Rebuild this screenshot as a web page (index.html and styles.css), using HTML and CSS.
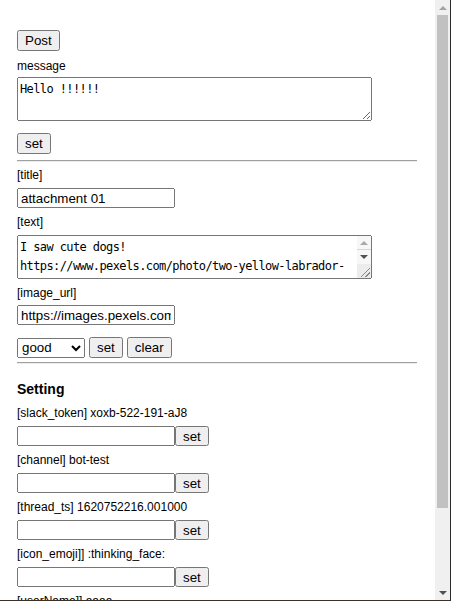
FILE: index.html
```html
<!DOCTYPE html>
<html lang="en">
<head>
<meta charset="utf-8">
<title>Slack post</title>
<link rel="stylesheet" href="styles.css">
</head>
<body>
<div class="frame">
  <main class="page">
    <button class="btn">Post</button>
    <div class="label label-msg">message</div>
    <textarea class="area" rows="2">Hello !!!!!!</textarea>
    <button class="btn btn-set">set</button>
    <hr class="rule rule-top">
    <div class="label label-first">[title]</div>
    <input class="text-input" type="text" value="attachment 01">
    <div class="label">[text]</div>
    <div class="area-wrap">
      <textarea class="area attach-text" rows="2">I saw cute dogs!
https://www.pexels.com/photo/two-yellow-labrador-retriever-puppies-1108099/</textarea>
      <div class="mini-sb" aria-hidden="true">
        <div class="mini-btn mini-up"></div>
        <div class="mini-btn mini-down"></div>
        <div class="mini-corner"></div>
      </div>
    </div>
    <div class="label label-tight">[image_url]</div>
    <input class="text-input" type="text" value="https://images.pexels.com/photos/1108099/pexels-photo-1108099.jpeg">
    <div class="controls">
      <select class="choice">
        <option>good</option>
        <option>bad</option>
      </select>
      <button class="btn">set</button>
      <button class="btn">clear</button>
    </div>
    <hr class="rule rule-bottom">
    <h3 class="heading">Setting</h3>
    <div class="field field-first">
      <div class="label">[slack_token] xoxb-522-191-aJ8</div>
      <div class="input-row"><input class="text-input" type="text"><button class="btn">set</button></div>
    </div>
    <div class="field">
      <div class="label">[channel] bot-test</div>
      <div class="input-row"><input class="text-input" type="text"><button class="btn">set</button></div>
    </div>
    <div class="field">
      <div class="label">[thread_ts] 1620752216.001000</div>
      <div class="input-row"><input class="text-input" type="text"><button class="btn">set</button></div>
    </div>
    <div class="field">
      <div class="label">[icon_emoji]] :thinking_face:</div>
      <div class="input-row"><input class="text-input" type="text"><button class="btn">set</button></div>
    </div>
    <div class="field">
      <div class="label">[userName]] aaaa</div>
      <div class="input-row"><input class="text-input" type="text"><button class="btn">set</button></div>
    </div>
  </main>
  <div class="scrollbar" aria-hidden="true">
    <div class="sb-btn sb-up"></div>
    <div class="sb-track"><div class="sb-thumb"></div></div>
    <div class="sb-btn sb-down"></div>
  </div>
</div>
</body>
</html>
```

FILE: styles.css
```css
html, body {
  margin: 0;
  padding: 0;
  background: #fff;
}

body {
  font-family: "Liberation Sans", Arial, sans-serif;
  font-size: 12px;
  color: #000;
  overflow: hidden;
}

.frame {
  width: 451px;
  height: 601px;
  box-sizing: border-box;
  border-right: 1px solid #2a2a2a;
  border-bottom: 1px solid #3a3226;
  display: flex;
  overflow: hidden;
}

.page {
  flex: 1;
  min-width: 0;
  overflow: hidden;
  padding: 30px 0 0 17px;
  display: flex;
  flex-direction: column;
  align-items: flex-start;
}

.page > * {
  flex-shrink: 0;
}

.btn {
  font-family: "Liberation Sans", Arial, sans-serif;
  font-size: 13.333px;
  margin: 0;
}

.btn-set {
  margin-top: 12px;
}

.label {
  line-height: 14px;
  margin: 7px 0 6px;
}

.label-msg {
  margin: 8px 0 4px;
}

.label-first {
  margin-top: 6px;
}

.label-tight {
  margin-bottom: 5px;
}

.area {
  display: block;
  width: 355px;
  height: 44px;
  box-sizing: border-box;
  margin: 0;
  padding: 2px;
  font-family: "DejaVu Sans Mono", "Liberation Mono", monospace;
  font-size: 12px;
  letter-spacing: -0.6px;
  line-height: 19px;
  color: #000;
}

.area-wrap {
  position: relative;
  width: 355px;
  height: 44px;
}

.attach-text {
  padding-right: 16px;
  overflow: hidden;
  resize: none;
}

.mini-sb {
  position: absolute;
  top: 1px;
  right: 1px;
  bottom: 1px;
  width: 14px;
  display: flex;
  flex-direction: column;
  background: #f0f0f0;
}

.mini-btn {
  height: 14px;
  flex: none;
  display: flex;
  align-items: center;
  justify-content: center;
  background: #f7f7f7;
}

.mini-up {
  border-bottom: 1px solid #d6d6d6;
  height: 13px;
}

.mini-up::before,
.mini-down::before {
  content: "";
  width: 0;
  height: 0;
  border-left: 4px solid transparent;
  border-right: 4px solid transparent;
}

.mini-up::before {
  border-bottom: 4px solid #a9a9a9;
}

.mini-down::before {
  border-top: 4px solid #505050;
}

.mini-corner {
  flex: 1;
  background:
    linear-gradient(135deg, transparent 6px, #8a8a8a 6px, #8a8a8a 7px, transparent 7px, transparent 9px, #8a8a8a 9px, #8a8a8a 10px, transparent 10px) right 1px bottom 1px / 9px 9px no-repeat,
    #ececec;
}

.text-input {
  width: 158px;
  height: 20px;
  box-sizing: border-box;
  margin: 0;
  padding: 1px 2px;
  font-family: "Liberation Sans", Arial, sans-serif;
  font-size: 13.333px;
  color: #000;
}

.controls {
  display: flex;
  align-items: center;
  gap: 4px;
  margin-top: 12px;
}

.choice {
  width: 68px;
  height: 20px;
  margin: 0;
  font-family: "Liberation Sans", Arial, sans-serif;
  font-size: 13.333px;
  color: #000;
}

.rule {
  width: 400px;
  height: 0;
  margin: 0;
  border: none;
  border-top: 1px solid #a0a0a0;
  border-bottom: 1px solid #ececec;
}

.rule-top {
  margin-top: 6px;
}

.rule-bottom {
  margin-top: 4px;
}

.heading {
  font-size: 14px;
  font-weight: bold;
  line-height: 16px;
  margin: 17px 0 0;
}

.field .label {
  margin: 7px 0 6px;
}

.field-first .label {
  margin-top: 9px;
}

.input-row {
  display: flex;
  align-items: stretch;
}

.input-row .btn {
  height: 20px;
  padding-top: 0;
  padding-bottom: 0;
}

.scrollbar {
  width: 15px;
  flex: none;
  background: #f0f0f0;
  display: flex;
  flex-direction: column;
}

.sb-btn {
  height: 15px;
  flex: none;
  display: flex;
  align-items: center;
  justify-content: center;
}

.sb-up::before,
.sb-down::before {
  content: "";
  width: 0;
  height: 0;
  border-left: 4px solid transparent;
  border-right: 4px solid transparent;
}

.sb-up::before {
  border-bottom: 4px solid #a3a3a3;
}

.sb-down::before {
  border-top: 4px solid #505050;
}

.sb-track {
  flex: 1;
  padding: 0 2px;
}

.sb-thumb {
  height: 493px;
  background: #c1c1c1;
}
```
